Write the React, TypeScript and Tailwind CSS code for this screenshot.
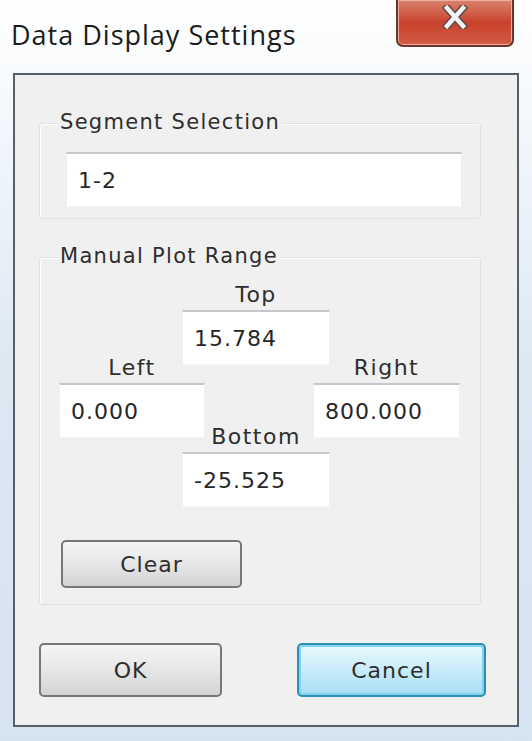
import { ReactNode } from "react";

const ui = { fontFamily: '"DejaVu Sans", "Liberation Sans", sans-serif' };

function Field({ value, className = "" }: { value: string; className?: string }) {
  return (
    <div
      className={`h-[55px] bg-white border-t-2 border-t-[#c4c8cc] border-x border-x-[#eceff1] border-b border-b-[#f4f6f7] flex items-center pl-[11px] text-[22px] tracking-[1px] text-[#262626] ${className}`}
    >
      {value}
    </div>
  );
}

function Group({ label, className = "", children }: { label: string; className?: string; children: ReactNode }) {
  return (
    <div className={`relative border border-[#dde2e6] rounded-[3px] shadow-[inset_1px_1px_0_#ffffff] ${className}`}>
      <span className="absolute left-[18px] -top-[17px] bg-[#f0f0f0] px-[2px] text-[21px] tracking-[1.3px] text-[#2e2e2e] leading-[30px]">
        {label}
      </span>
      {children}
    </div>
  );
}

function Label({ text, className = "" }: { text: string; className?: string }) {
  return <span className={`text-[22px] tracking-[1.5px] text-[#2e2e2e] leading-[30px] ${className}`}>{text}</span>;
}

function Button({ label, isDefault = false, className = "" }: { label: string; isDefault?: boolean; className?: string }) {
  return (
    <div
      className={`flex items-center justify-center rounded-[5px] text-[22px] tracking-[1px] text-[#2e2e2e] ${
        isDefault
          ? "border-2 border-[#2f8fb0] bg-gradient-to-b from-[#eaf8fd] via-[#c8ecf8] to-[#a7def3] shadow-[inset_0_0_0_2px_#7fd3ef]"
          : "border-2 border-[#777] bg-gradient-to-b from-[#f5f5f5] via-[#e6e6e6] to-[#d4d4d4]"
      } ${className}`}
    >
      {label}
    </div>
  );
}

export default function App() {
  return (
    <div
      className="w-[532px] h-[741px] bg-gradient-to-b from-white via-[#dde8f3] to-[#d6e3f0] flex flex-col overflow-hidden"
      style={ui}
    >
      {/* title bar */}
      <div className="h-[73px] flex items-start justify-between">
        <div
          className="pl-[11px] pt-[15px] text-[27px] tracking-[1px] text-[#1b1b1b]"
          style={{ fontFamily: '"Open Sans", "DejaVu Sans", sans-serif' }}
        >
          Data Display Settings
        </div>
        <div className="mr-[18px] w-[118px] h-[47px] rounded-b-[7px] border-2 border-[#6d3329] border-t-0 bg-gradient-to-b from-[#d9826f] via-[#c8412c] to-[#d45c45] flex items-start justify-center pt-[5px] shadow-[inset_0_0_0_1px_#ecb0a2]">
          <svg width="26" height="24" viewBox="0 0 26 24">
            <path d="M5 3 L21 21 M21 3 L5 21" stroke="#5e4a48" strokeWidth="7.5" strokeLinecap="square" />
            <path d="M5 3 L21 21 M21 3 L5 21" stroke="#f4f4f4" strokeWidth="4.5" strokeLinecap="square" />
          </svg>
        </div>
      </div>

      {/* client area */}
      <div className="mx-[13px] mb-[14px] flex-1 border-2 border-[#55606b] bg-[#f0f0f0] flex flex-col pl-[24px] pr-[36px]">
        <Group label="Segment Selection" className="mt-[48px] h-[96px] pl-[26px] pr-[18px] pt-[28px]">
          <Field value="1-2" className="h-[53px]" />
        </Group>

        <Group label="Manual Plot Range" className="mt-[38px] h-[348px]">
          <div className="flex items-start pl-[19px] pt-[22px]">
            <div className="w-[146px] pt-[73px] flex flex-col items-center">
              <Label text="Left" />
              <Field value="0.000" className="w-full" />
            </div>
            <div className="w-[148px] -ml-[23px] flex flex-col items-center">
              <Label text="Top" />
              <Field value="15.784" className="w-full" />
              <Label text="Bottom" className="mt-[57px]" />
              <Field value="-25.525" className="w-full" />
            </div>
            <div className="w-[147px] -ml-[17px] pt-[73px] flex flex-col items-center">
              <Label text="Right" />
              <Field value="800.000" className="w-full" />
            </div>
          </div>
          <Button label="Clear" className="ml-[21px] mt-[33px] w-[181px] h-[48px] rounded-[3px]" />
        </Group>

        <div className="mt-[38px] flex justify-between">
          <Button label="OK" className="w-[183px] h-[54px]" />
          <Button label="Cancel" isDefault className="w-[189px] h-[54px] -mr-[5px]" />
        </div>
      </div>
    </div>
  );
}
